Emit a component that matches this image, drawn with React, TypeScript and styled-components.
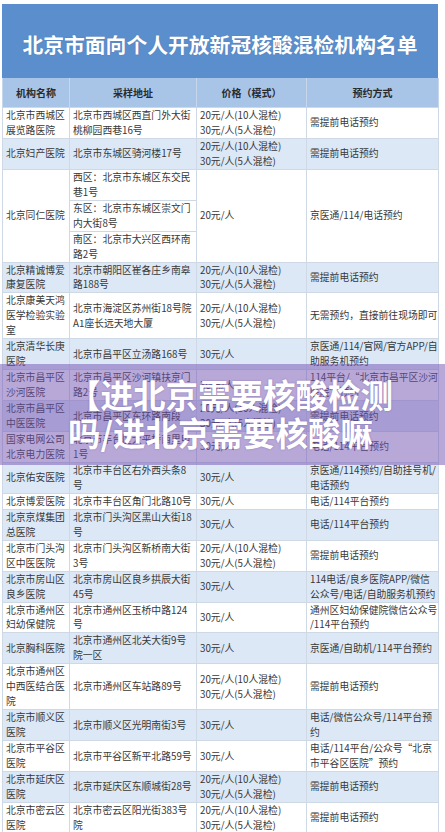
import { Fragment } from "react";
import styled, { createGlobalStyle } from "styled-components";

const GlobalStyle = createGlobalStyle`
  html, body {
    margin: 0;
    padding: 0;
    background: #fff;
  }
  body {
    font-family: "Noto Sans CJK SC", "Noto Sans", sans-serif;
  }
`;

type Row = {
  name: string[];
  addr: string[][];
  price: string[];
  book: string[];
};

const P2 = ["20元/人(10人混检)", "30元/人(5人混检)"];
const P30 = ["30元/人"];
const CALL = ["需提前电话预约"];

const rows: Row[] = [
  { name: ["北京市西城区", "展览路医院"], addr: [["北京市西城区西直门外大街", "桃柳园西巷16号"]], price: P2, book: CALL },
  { name: ["北京妇产医院"], addr: [["北京市东城区骑河楼17号"]], price: P2, book: CALL },
  {
    name: ["北京同仁医院"],
    addr: [
      ["西区：北京市东城区东交民", "巷1号"],
      ["东区：北京市东城区崇文门", "内大街8号"],
      ["南区：北京市大兴区西环南", "路2号"],
    ],
    price: ["20元/人"],
    book: ["京医通/114/电话预约"],
  },
  { name: ["北京精诚博爱", "康复医院"], addr: [["北京市朝阳区崔各庄乡南皋", "路188号"]], price: P2, book: CALL },
  { name: ["北京康美天鸿", "医学检验实验", "室"], addr: [["北京市海淀区苏州街18号院", "A1座长远天地大厦"]], price: P2, book: ["无需预约，直接前往现场即可"] },
  { name: ["北京清华长庚", "医院"], addr: [["北京市昌平区立汤路168号"]], price: P30, book: ["京医通/114/官网/官方APP/自", "助服务机预约"] },
  { name: ["北京市昌平区", "沙河医院"], addr: [["北京市昌平区沙河镇扶京门", "路2号"]], price: P30, book: ["114平台/“北京市昌平区沙河", "医院”预约"] },
  { name: ["北京市昌平区", "中医医院"], addr: [["北京市昌平区东环路南段"]], price: P2, book: CALL },
  { name: ["国家电网公司", "北京电力医院"], addr: [["北京市丰台区太平桥西里甲", "1号"]], price: P30, book: ["电话/114平台预约"] },
  { name: ["北京佑安医院"], addr: [["北京市丰台区右外西头条8", "号"]], price: P30, book: ["京医通/114预约/自助挂号机/", "电话预约"] },
  { name: ["北京博爱医院"], addr: [["北京市丰台区角门北路10号"]], price: P30, book: ["电话/114平台预约"] },
  { name: ["北京京煤集团", "总医院"], addr: [["北京市门头沟区黑山大街18", "号"]], price: P30, book: ["电话/114平台预约"] },
  { name: ["北京市门头沟", "区中医医院"], addr: [["北京市门头沟区新桥南大街", "3号"]], price: P2, book: CALL },
  { name: ["北京市房山区", "良乡医院"], addr: [["北京市房山区良乡拱辰大街", "45号"]], price: P30, book: ["114电话/良乡医院APP/微信", "公众号/电话/自助服务机预约"] },
  { name: ["北京市通州区", "妇幼保健院"], addr: [["北京市通州区玉桥中路124", "号"]], price: P30, book: ["通州区妇幼保健院微信公众号", "/114平台预约"] },
  { name: ["北京胸科医院"], addr: [["北京市通州区北关大街9号", "院一区"]], price: P30, book: ["京医通/自助机/114平台预约"] },
  { name: ["北京市通州区", "中西医结合医", "院"], addr: [["北京市通州区车站路89号"]], price: P2, book: CALL },
  { name: ["北京市顺义区", "医院"], addr: [["北京市顺义区光明南街3号"]], price: P30, book: ["电话/微信公众号/114平台预", "约"] },
  { name: ["北京市平谷区", "医院"], addr: [["北京市平谷区新平北路59号"]], price: P30, book: ["电话/114平台/公众号“北京", "市平谷区医院”预约"] },
  { name: ["北京市延庆区", "医院"], addr: [["北京市延庆区东顺城街28号"]], price: P2, book: CALL },
  { name: ["北京市密云区", "医院"], addr: [["北京市密云区阳光街383号", "院"]], price: P2, book: CALL },
];

function Lines({ items }: { items: string[] }) {
  return (
    <>
      {items.map((t, i) => (
        <Line key={i}>{t}</Line>
      ))}
    </>
  );
}

function App() {
  return (
    <Page>
      <GlobalStyle />
      <Title>北京市面向个人开放新冠核酸混检机构名单</Title>
      <Table>
        <colgroup>
          <col style={{ width: 67 }} />
          <col style={{ width: 127 }} />
          <col style={{ width: 110 }} />
          <col style={{ width: 132 }} />
        </colgroup>
        <thead>
          <tr>
            <Th>机构名称</Th>
            <Th>采样地址</Th>
            <Th>价格（模式）</Th>
            <Th>预约方式</Th>
          </tr>
        </thead>
        <tbody>
          {rows.map((r, i) => {
            const alt = i % 2 === 1;
            const span = r.addr.length;
            return (
              <Fragment key={i}>
                <Tr $alt={alt}>
                  <Td rowSpan={span}>
                    <Lines items={r.name} />
                  </Td>
                  <Td>
                    <Lines items={r.addr[0]} />
                  </Td>
                  <Td rowSpan={span}>
                    <Lines items={r.price} />
                  </Td>
                  <Td rowSpan={span}>
                    <Lines items={r.book} />
                  </Td>
                </Tr>
                {r.addr.slice(1).map((a, j) => (
                  <Tr key={j} $alt={alt}>
                    <Td>
                      <Lines items={a} />
                    </Td>
                  </Tr>
                ))}
              </Fragment>
            );
          })}
        </tbody>
      </Table>
      <Overlay>
        <OverlayText>
          【进北京需要核酸检测
          <br />
          吗/进北京需要核酸嘛
        </OverlayText>
      </Overlay>
    </Page>
  );
}

const Page = styled.div`
  position: relative;
  width: 445px;
  height: 832px;
  overflow: hidden;
  box-sizing: border-box;
  padding: 4px 7px 0 2px;
  background: #fff;
`;

const Title = styled.div`
  height: 74px;
  box-sizing: border-box;
  padding-top: 6px;
  background: #5b8ecd;
  color: #fff;
  display: flex;
  align-items: center;
  justify-content: center;
  font-size: 20.8px;
  font-weight: 700;
  white-space: nowrap;
  text-shadow: 0 0 1px rgba(40, 70, 120, 0.4);
`;

const Table = styled.table`
  width: 436px;
  table-layout: fixed;
  border-collapse: collapse;
  border-bottom: 2px solid #8eafd8;
`;

const Th = styled.th`
  height: 29px;
  padding: 0;
  background: #a8c5e8;
  color: #2a2a2a;
  font-size: 10px;
  font-weight: 700;
  text-align: center;
  border-left: 1px solid #c6d7ec;
  border-right: 1px solid #c6d7ec;
`;

const Tr = styled.tr<{ $alt: boolean }>`
  background: ${({ $alt }) => ($alt ? "#dce8f6" : "#ffffff")};
`;

const Td = styled.td`
  padding: 0 0 0 3px;
  border: 1px solid #cfd9e6;
  vertical-align: middle;
  color: #383838;
  font-size: 9.8px;
  line-height: 14.95px;
  overflow: hidden;
`;

const Line = styled.div`
  white-space: nowrap;
`;

const Overlay = styled.div`
  position: absolute;
  left: 0;
  right: 0;
  top: 364px;
  height: 101px;
  background: rgba(113, 81, 177, 0.5);
  display: flex;
  align-items: center;
`;

const OverlayText = styled.div`
  padding-left: 68px;
  margin-top: -3px;
  color: #fff;
  font-size: 32.5px;
  font-weight: 700;
  line-height: 38px;
  white-space: nowrap;
  text-shadow: 0 0 2px rgba(60, 30, 110, 0.35);
`;

export default App;
